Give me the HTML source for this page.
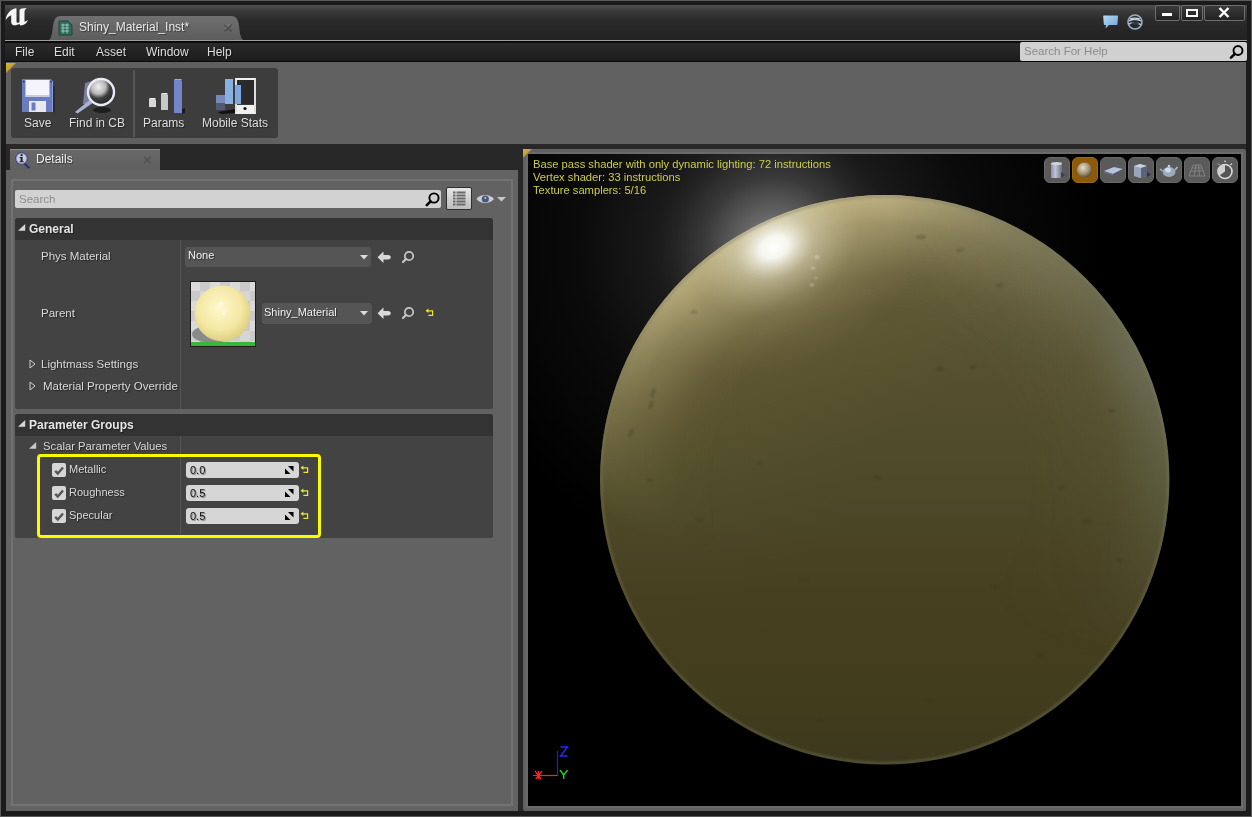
<!DOCTYPE html>
<html><head><meta charset="utf-8">
<style>
*{margin:0;padding:0;box-sizing:border-box}
html,body{width:1252px;height:817px;overflow:hidden;background:#1c1c1c}
body{position:relative;font-family:"Liberation Sans",sans-serif;color:#ddd;-webkit-font-smoothing:antialiased}
.a{position:absolute}
.t{position:absolute;white-space:nowrap;line-height:1;will-change:transform;text-shadow:1px 1px 1px rgba(0,0,0,0.45)}
/* frame */
#frame{left:0;top:0;width:1252px;height:817px;border:1px solid #5a5a5a;background:#1b1b1b}
#app{left:6px;top:62px;width:1240px;height:749px;background:#282828}
#title{left:5px;top:5px;width:1242px;height:35px;background:linear-gradient(#505050 0,#3a3a3a 6px,#2a2a2a 16px,#222 35px)}
#tab{left:45px;top:16px;width:202px;height:25px}
#menubar{left:5px;top:40px;width:1242px;height:22px;background:linear-gradient(#2c2c2c,#1c1c1c);border-top:1px solid #9a9a9a;box-shadow:inset 0 1px 0 #0a0a0a,inset 0 2px 0 #0a0a0a;border-bottom:1px solid #0a0a0a}
#toolarea{left:6px;top:62px;width:1240px;height:82px;background:#606060}
#toolbox{left:11px;top:68px;width:267px;height:70px;background:#3d3d3d;border-radius:3px}
#gap{left:6px;top:144px;width:1240px;height:5px;background:#282828}
#dtab{left:10px;top:149px;width:150px;height:21px;background:linear-gradient(#686868,#606060);border-top:1px solid #a08e3c}
#dpanel{left:6px;top:170px;width:512px;height:641px;background:#636363}
#dinner{left:11px;top:179px;width:502px;height:627px;background:#626262;border:2px solid #727272}
#vpanel{left:523px;top:149px;width:723px;height:662px;background:#616161;border-radius:2px}
#vinner{left:526px;top:152px;width:717px;height:656px;background:#6a6a6a}
#vp{left:528px;top:154px;width:713px;height:652px;background:#000;overflow:hidden}
</style></head><body>
<div id="frame" class="a"></div>
<div id="app" class="a"></div>
<div id="title" class="a"></div>
<div id="tab" class="a"><svg width="202" height="25"><defs><linearGradient id="tabg" x1="0" y1="0" x2="0" y2="1"><stop offset="0" stop-color="#707070"/><stop offset="1" stop-color="#5c5c5c"/></linearGradient></defs><path d="M0 25 C5 25 6.5 22 7.5 14 C8.5 4 10 0 16 0 L186 0 C192 0 193.5 4 194.5 14 C195.5 22 197 25 202 25 Z" fill="url(#tabg)"/></svg></div>
<div class="t" style="left:79px;top:21px;font-size:12px;color:#e8e8e8">Shiny_Material_Inst*</div>
<div class="t" style="left:224px;top:21px;font-size:12px;color:#8a8a8a">×</div>

<!-- UE logo -->
<svg class="a" style="left:0;top:0" width="32" height="32" viewBox="0 0 32 32">
<path d="M5.6 19.8 C6.6 13.5 10.5 9.6 15.3 8.2 L16.5 8.6 L16.5 21.2 C16.5 22.6 17.6 23 18.6 22.5 L19.5 22 L19.5 11 C19.5 9.6 20.4 8.8 21.8 8.6 L26.8 8 C25.4 9 24.5 10.2 24.5 12 L24.5 21.8 C25.8 21.4 27 20.8 28 20 C26.8 23.2 24 25.4 20.8 25.6 C19.8 25.2 19.4 24.6 19.5 23.8 C17.5 25 15.5 25.6 13.5 25.2 C12 24.8 11.2 23.6 11.2 22 L11.2 15.2 C9 16 7.2 17.6 6 19.5Z" fill="#f6f6f6"/>
</svg>
<!-- tab icon -->
<svg class="a" style="left:58px;top:20px" width="15" height="16" viewBox="0 0 15 16">
<path d="M1 1 L10 1 L14 5 L14 15 L1 15Z" fill="#2f6a5a" stroke="#1a3a30" stroke-width="0.8"/>
<path d="M3 5 h8 M3 8 h8 M3 11 h8 M5 3.5 v10 M9 3.5 v10" stroke="#9ad0c0" stroke-width="0.9"/>
</svg>
<svg class="a" style="left:224px;top:24px" width="8" height="8"><path d="M0.5 0.5 L7.5 7.5 M7.5 0.5 L0.5 7.5" stroke="#4a4a4a" stroke-width="1.1"/></svg>
<!-- chat & globe -->
<svg class="a" style="left:1102px;top:14px" width="17" height="16" viewBox="0 0 17 16">
<defs><linearGradient id="chat" x1="0" y1="0" x2="1" y2="1"><stop offset="0" stop-color="#b8dcf4"/><stop offset="1" stop-color="#6aa0d0"/></linearGradient></defs>
<path d="M2 1.5 L15 1.5 C15.6 1.5 16 2 16 2.6 L15.5 10 C15.5 10.6 15 11 14.4 11 L7 11 L3.5 14.5 L4 11 L2.8 11 C2.2 11 1.8 10.5 1.8 10 L1.2 2.6 C1.2 2 1.5 1.5 2 1.5Z" fill="url(#chat)"/>
</svg>
<svg class="a" style="left:1126px;top:13px" width="18" height="18" viewBox="0 0 18 18">
<circle cx="9" cy="9" r="7" fill="none" stroke="#9ab0c8" stroke-width="1.6"/>
<path d="M3 8 C6 6 11 6 15.5 8 M3 11 C7 9 11 9.5 15 11.5 M4 6 C8 4.5 11 5 14 6" stroke="#c8d8e8" stroke-width="1.3" fill="none"/>
<path d="M4 10 L10 8.5 L14 10 L9 12Z" fill="#2a3a50"/>
</svg>
<!-- window buttons -->
<div class="a" style="left:1155px;top:5px;width:25px;height:16px;border:1px solid #6e6e6e;border-radius:2px;background:linear-gradient(#3a3a3a,#222)"></div>
<div class="a" style="left:1181px;top:5px;width:22px;height:16px;border:1px solid #6e6e6e;border-radius:2px;background:linear-gradient(#3a3a3a,#222)"></div>
<div class="a" style="left:1204px;top:5px;width:41px;height:16px;border:1px solid #6e6e6e;border-radius:2px;background:linear-gradient(#3a3a3a,#222)"></div>
<div class="a" style="left:1162px;top:13px;width:10px;height:3px;background:#fff"></div>
<div class="a" style="left:1186px;top:9px;width:12px;height:8px;border:2px solid #fff"></div>
<svg class="a" style="left:1218px;top:7px" width="12" height="11"><path d="M1.5 1 L10.5 10 M10.5 1 L1.5 10" stroke="#fff" stroke-width="2.4"/></svg>
<div id="menubar" class="a"></div>
<div class="t" style="left:15px;top:46px;font-size:12px;color:#ddd">File</div>
<div class="t" style="left:54px;top:46px;font-size:12px;color:#ddd">Edit</div>
<div class="t" style="left:96px;top:46px;font-size:12px;color:#ddd">Asset</div>
<div class="t" style="left:146px;top:46px;font-size:12px;color:#ddd">Window</div>
<div class="t" style="left:207px;top:46px;font-size:12px;color:#ddd">Help</div>
<div class="a" style="left:1020px;top:42px;width:227px;height:19px;background:#d0d0d0;border-radius:2px"></div>
<div class="t" style="left:1024px;top:46px;font-size:11.5px;color:#8c8c8c;text-shadow:none">Search For Help</div>
<svg class="a" style="left:1227px;top:43px" width="18" height="18" viewBox="0 0 18 18"><circle cx="11" cy="7.5" r="4.5" fill="none" stroke="#000" stroke-width="1.9"/><path d="M7.8 10.8 L4 14.6" stroke="#000" stroke-width="2.6" stroke-linecap="round"/></svg>
<div id="toolarea" class="a"></div>
<div id="toolbox" class="a"></div>
<div class="a" style="left:133px;top:70px;width:2px;height:67px;background:#565656"></div>

<svg class="a" style="left:6px;top:63px" width="10" height="10"><path d="M0 0 L10 0 L0 10Z" fill="url(#ytri)"/></svg>
<!-- floppy -->
<svg class="a" style="left:20px;top:78px" width="36" height="36" viewBox="0 0 36 36">
<path d="M2 1.5 L31 1.5 L33 3.5 L33 34 L2 34Z" fill="#6a7cc0"/>
<path d="M2 1.5 L31 1.5 L33 3.5 L33 34 L32 34 L32 4 L30.5 2.5 L2 2.5Z" fill="#8a9ad8"/>
<rect x="5.5" y="2" width="24" height="17" fill="#f4f4fa"/>
<rect x="5.5" y="17" width="24" height="2" fill="#c8cce0"/>
<rect x="9" y="23" width="17" height="11" fill="#e8e8f0"/>
<rect x="11.5" y="24.5" width="4" height="8" fill="#6a7cc0"/>
<circle cx="3.8" cy="3.5" r="0.9" fill="#2a3060"/><circle cx="31" cy="3.5" r="0.9" fill="#2a3060"/>
<path d="M33 8 L35 9 L35 34 L33 34.5Z" fill="#222" opacity="0.6"/>
</svg>
<!-- magnifier -->
<svg class="a" style="left:70px;top:76px" width="48" height="42" viewBox="0 0 48 42">
<defs><radialGradient id="lens" cx="0.4" cy="0.3" r="0.8"><stop offset="0" stop-color="#f0f0f0"/><stop offset="0.35" stop-color="#b8b8b8"/><stop offset="0.55" stop-color="#404040"/><stop offset="1" stop-color="#1a1a1a"/></radialGradient></defs>
<path d="M15 7 L22 5 L22 28 L13 28Z" fill="#8890b0" opacity="0.8"/>
<ellipse cx="32" cy="34" rx="9" ry="3" fill="#111" opacity="0.7"/>
<path d="M5 36 L19 24.5 L22 27.5 L7.5 37.5Z" fill="#a8b0d8"/>
<circle cx="31" cy="16" r="13" fill="url(#lens)" stroke="#e8eaf8" stroke-width="2.4"/>
</svg>
<!-- params bars -->
<svg class="a" style="left:146px;top:77px" width="42" height="38" viewBox="0 0 42 38">
<path d="M3 22 L9 22 L10 23 L10 30 L3 30Z" fill="#d8d8d8"/><path d="M3 21 L9 21 L10 22 L4 22Z" fill="#f0f0f0"/>
<path d="M15 17 L21 17 L22 18 L22 33 L15 33Z" fill="#c8c8c8"/><path d="M15 16 L21 16 L22 17 L16 17Z" fill="#e8e8e8"/>
<path d="M28 3 L35 3 L36 4 L36 36 L28 36Z" fill="#7484c8"/><path d="M28 2 L35 2 L36 3 L29 3Z" fill="#98a8e0"/>
<path d="M36 32 L39 31 L39 36 L36 37Z" fill="#1a1a1a"/>
</svg>
<!-- mobile stats -->
<svg class="a" style="left:213px;top:77px" width="46" height="38" viewBox="0 0 46 38">
<rect x="3" y="18" width="9" height="15" fill="#7888b8"/><rect x="3" y="26" width="9" height="7" fill="#505a70"/>
<rect x="12" y="2" width="8" height="25" fill="#88b0e0"/>
<rect x="22" y="8" width="6" height="18" fill="#78a0d8"/>
<path d="M23 2 L42 2 L42 36 L23 36Z" fill="none" stroke="#f0f0f0" stroke-width="1.8"/>
<rect x="24" y="3" width="17" height="24" fill="#2a2a2a"/>
<rect x="22" y="8" width="6" height="19" fill="#80a8e0"/>
<rect x="24" y="28" width="17" height="7.5" fill="#f0f0f0"/>
<circle cx="32" cy="31.5" r="1.6" fill="#111"/>
<path d="M5 35 L22 32 L22 36 L8 37Z" fill="#111"/>
</svg>
<div class="t" style="left:24px;top:117px;font-size:12px;color:#ddd">Save</div>
<div class="t" style="left:69px;top:117px;font-size:12px;color:#ddd">Find in CB</div>
<div class="t" style="left:143px;top:117px;font-size:12px;color:#ddd">Params</div>
<div class="t" style="left:202px;top:117px;font-size:12px;color:#ddd">Mobile Stats</div>
<div id="gap" class="a"></div>
<div id="dtab" class="a"></div>
<div class="t" style="left:36px;top:153px;font-size:12px;color:#eee">Details</div>
<div id="dpanel" class="a"></div>
<div id="dinner" class="a"></div>

<!-- details content -->
<div class="a" style="left:15px;top:190px;width:426px;height:18px;background:#d2d2d2;border-radius:2px"></div>
<div class="t" style="left:19px;top:194px;font-size:11.5px;color:#8e8e8e;text-shadow:none">Search</div>
<div class="a" style="left:446px;top:187px;width:26px;height:23px;background:linear-gradient(#e6e6e6,#bdbdbd);border:1px solid #2e2e2e;border-radius:2px"></div>
<!-- General category -->
<div class="a" style="left:15px;top:218px;width:478px;height:191px;background:#434343;border-radius:3px 3px 2px 2px;overflow:hidden">
  <div class="a" style="left:0;top:0;width:478px;height:22px;background:#333"></div>
  <div class="a" style="left:165px;top:22px;width:1px;height:169px;background:#555"></div>
</div>
<div class="t" style="left:29px;top:223px;font-size:12px;font-weight:bold;color:#e6e6e6">General</div>
<div class="t" style="left:41px;top:251px;font-size:11.5px;color:#d8d8d8">Phys Material</div>
<div class="a" style="left:185px;top:247px;width:186px;height:20px;background:#555;border-radius:3px"></div>
<div class="t" style="left:188px;top:250px;font-size:11px;color:#f0f0f0">None</div>
<div class="t" style="left:41px;top:308px;font-size:11.5px;color:#d8d8d8">Parent</div>
<div class="a" style="left:262px;top:303px;width:110px;height:21px;background:#555;border-radius:3px"></div>
<div class="t" style="left:264px;top:307px;font-size:11px;color:#f0f0f0">Shiny_Material</div>
<div class="t" style="left:41px;top:359px;font-size:11.5px;color:#d8d8d8">Lightmass Settings</div>
<div class="t" style="left:43px;top:381px;font-size:11.5px;color:#d8d8d8">Material Property Override</div>
<!-- Parameter groups -->
<div class="a" style="left:15px;top:414px;width:478px;height:124px;background:#434343;border-radius:3px 3px 2px 2px;overflow:hidden">
  <div class="a" style="left:0;top:0;width:478px;height:22px;background:#333"></div>
  <div class="a" style="left:165px;top:22px;width:1px;height:102px;background:#555"></div>
</div>
<div class="t" style="left:29px;top:419px;font-size:12px;font-weight:bold;color:#e6e6e6">Parameter Groups</div>
<div class="t" style="left:43px;top:441px;font-size:11.25px;color:#d8d8d8">Scalar Parameter Values</div>
<div class="t" style="left:69px;top:464px;font-size:11px;color:#d8d8d8">Metallic</div>
<div class="t" style="left:69px;top:487px;font-size:11px;color:#d8d8d8">Roughness</div>
<div class="t" style="left:69px;top:510px;font-size:11px;color:#d8d8d8">Specular</div>
<div class="a" style="left:186px;top:462px;width:113px;height:16px;background:#d6d6d6;border-radius:3px"></div>
<div class="a" style="left:186px;top:485px;width:113px;height:16px;background:#d6d6d6;border-radius:3px"></div>
<div class="a" style="left:186px;top:508px;width:113px;height:16px;background:#d6d6d6;border-radius:3px"></div>
<div class="t" style="left:190px;top:465px;font-size:11px;color:#111">0.0</div>
<div class="t" style="left:190px;top:488px;font-size:11px;color:#111">0.5</div>
<div class="t" style="left:190px;top:511px;font-size:11px;color:#111">0.5</div>

<svg class="a" style="left:13px;top:151px" width="20" height="18" viewBox="0 0 20 18">
<path d="M12 12 L17 16.5 L15.5 17.5 L10.5 13Z" fill="#1e2a6a"/>
<circle cx="8.5" cy="7.5" r="6" fill="#8a94c0" stroke="#3a4a8a" stroke-width="1"/>
<circle cx="8.5" cy="7.5" r="4.8" fill="#c8cce0"/>
<rect x="7.6" y="6" width="2" height="5" fill="#222"/><rect x="6.6" y="10.2" width="4" height="1" fill="#222"/><rect x="6.6" y="6" width="2" height="1" fill="#222"/>
<circle cx="8.6" cy="4.2" r="1.1" fill="#222"/>
</svg>
<svg class="a" style="left:143px;top:156px" width="9" height="8"><path d="M1 0.5 L8 7.5 M8 0.5 L1 7.5" stroke="#505050" stroke-width="1.1"/></svg>
<!-- search magnifier -->
<svg class="a" style="left:423px;top:190px" width="18" height="18" viewBox="0 0 18 18">
<circle cx="11" cy="8" r="4.6" fill="none" stroke="#000" stroke-width="1.9"/>
<path d="M7.6 11.4 L3.8 15.2" stroke="#000" stroke-width="2.6" stroke-linecap="round"/>
</svg>
<!-- list button icon -->
<svg class="a" style="left:446px;top:187px" width="26" height="23" viewBox="0 0 26 23">
<g fill="#6a6a6a"><rect x="7" y="4.5" width="2.5" height="2"/><rect x="10.5" y="4.5" width="9" height="2"/>
<rect x="7" y="7.5" width="2.5" height="2"/><rect x="10.5" y="7.5" width="9" height="2"/>
<rect x="7" y="10.5" width="2.5" height="2"/><rect x="10.5" y="10.5" width="9" height="2"/>
<rect x="7" y="13.5" width="2.5" height="2"/><rect x="10.5" y="13.5" width="9" height="2"/>
<rect x="7" y="16.5" width="2.5" height="2"/><rect x="10.5" y="16.5" width="9" height="2"/></g>
</svg>
<!-- eye -->
<svg class="a" style="left:475px;top:192px" width="34" height="14" viewBox="0 0 34 14">
<path d="M1.5 7 C5 1.5 15 1.5 19 7 C15 12.5 5 12.5 1.5 7Z" fill="#c8ccd8"/>
<circle cx="10.3" cy="7" r="3.6" fill="#4a5878"/><circle cx="10.3" cy="6" r="1" fill="#c0c8d8"/>
<path d="M22 5 L31 5 L26.5 9.5Z" fill="#c8c8c8"/>
</svg>
<!-- General triangle -->
<svg class="a" style="left:15px;top:222px" width="12" height="11"><path d="M10.2 2 L10.2 8.8 L3 8.8Z" fill="#d8d8d8"/></svg>
<svg class="a" style="left:15px;top:418px" width="12" height="11"><path d="M10.2 2 L10.2 8.8 L3 8.8Z" fill="#d8d8d8"/></svg>
<svg class="a" style="left:28px;top:440px" width="12" height="11"><path d="M8.2 2 L8.2 8.8 L1 8.8Z" fill="#c8c8c8"/></svg>
<!-- outline triangles -->
<svg class="a" style="left:29px;top:359px" width="8" height="10"><path d="M1 1 L6 5 L1 9Z" fill="none" stroke="#d0d0d0" stroke-width="1"/></svg>
<svg class="a" style="left:29px;top:381px" width="8" height="10"><path d="M1 1 L6 5 L1 9Z" fill="none" stroke="#d0d0d0" stroke-width="1"/></svg>
<!-- combo arrows + icons row1 -->
<svg class="a" style="left:358px;top:253px" width="12" height="8"><path d="M2 2 L10 2 L6 6.5Z" fill="#dcdcdc"/></svg>
<svg class="a" style="left:358px;top:309px" width="12" height="8"><path d="M2 2 L10 2 L6 6.5Z" fill="#dcdcdc"/></svg>
<svg class="a" style="left:376px;top:250px" width="16" height="15" viewBox="0 0 16 15"><path d="M1.5 7.2 L7.5 1.5 L7.5 5 L12 5 C14 5 14.8 6 14.8 7.2 C14.8 8.4 14 9.4 12 9.4 L7.5 9.4 L7.5 13 Z" fill="#d8d8d8"/></svg>
<svg class="a" style="left:376px;top:306px" width="16" height="15" viewBox="0 0 16 15"><path d="M1.5 7.2 L7.5 1.5 L7.5 5 L12 5 C14 5 14.8 6 14.8 7.2 C14.8 8.4 14 9.4 12 9.4 L7.5 9.4 L7.5 13 Z" fill="#d8d8d8"/></svg>
<svg class="a" style="left:400px;top:249px" width="16" height="16" viewBox="0 0 16 16"><circle cx="9" cy="7" r="4.2" fill="none" stroke="#c8c8c8" stroke-width="1.7"/><path d="M6 10 L3 13" stroke="#c8c8c8" stroke-width="2.2" stroke-linecap="round"/></svg>
<svg class="a" style="left:400px;top:305px" width="16" height="16" viewBox="0 0 16 16"><circle cx="9" cy="7" r="4.2" fill="none" stroke="#c8c8c8" stroke-width="1.7"/><path d="M6 10 L3 13" stroke="#c8c8c8" stroke-width="2.2" stroke-linecap="round"/></svg>
<svg class="a" style="left:425px;top:308px" width="10" height="9" viewBox="0 0 10 9"><path d="M3 2.8 L7.6 2.8 L7.6 7.3 L3.4 7.3" fill="none" stroke="#e8e830" stroke-width="1.2"/><path d="M0.6 2.8 L3.4 0.6 L3.4 5Z" fill="#e8e830"/></svg>
<svg class="a" style="left:300px;top:465px" width="10" height="9" viewBox="0 0 10 9"><path d="M3 2.8 L7.6 2.8 L7.6 7.3 L3.4 7.3" fill="none" stroke="#e8e830" stroke-width="1.2"/><path d="M0.6 2.8 L3.4 0.6 L3.4 5Z" fill="#e8e830"/></svg>
<svg class="a" style="left:284px;top:465px" width="11" height="10"><path d="M4 1 L9.5 1 L9.5 6.5Z M1 3.5 L1 9 L6.5 9Z" fill="#000"/></svg>
<svg class="a" style="left:52px;top:463px" width="15" height="15" viewBox="0 0 15 15"><rect x="0" y="0" width="14" height="14" rx="2" fill="#d6d6d6"/><path d="M3.2 7.8 L5.8 10.5 L11 4.5" fill="none" stroke="#555" stroke-width="2.4"/></svg>
<svg class="a" style="left:300px;top:488px" width="10" height="9" viewBox="0 0 10 9"><path d="M3 2.8 L7.6 2.8 L7.6 7.3 L3.4 7.3" fill="none" stroke="#e8e830" stroke-width="1.2"/><path d="M0.6 2.8 L3.4 0.6 L3.4 5Z" fill="#e8e830"/></svg>
<svg class="a" style="left:284px;top:488px" width="11" height="10"><path d="M4 1 L9.5 1 L9.5 6.5Z M1 3.5 L1 9 L6.5 9Z" fill="#000"/></svg>
<svg class="a" style="left:52px;top:486px" width="15" height="15" viewBox="0 0 15 15"><rect x="0" y="0" width="14" height="14" rx="2" fill="#d6d6d6"/><path d="M3.2 7.8 L5.8 10.5 L11 4.5" fill="none" stroke="#555" stroke-width="2.4"/></svg>
<svg class="a" style="left:300px;top:511px" width="10" height="9" viewBox="0 0 10 9"><path d="M3 2.8 L7.6 2.8 L7.6 7.3 L3.4 7.3" fill="none" stroke="#e8e830" stroke-width="1.2"/><path d="M0.6 2.8 L3.4 0.6 L3.4 5Z" fill="#e8e830"/></svg>
<svg class="a" style="left:284px;top:511px" width="11" height="10"><path d="M4 1 L9.5 1 L9.5 6.5Z M1 3.5 L1 9 L6.5 9Z" fill="#000"/></svg>
<svg class="a" style="left:52px;top:509px" width="15" height="15" viewBox="0 0 15 15"><rect x="0" y="0" width="14" height="14" rx="2" fill="#d6d6d6"/><path d="M3.2 7.8 L5.8 10.5 L11 4.5" fill="none" stroke="#555" stroke-width="2.4"/></svg>
<svg class="a" style="left:190px;top:281px" width="66" height="66" viewBox="0 0 66 66">
<defs>
<pattern id="chk" width="20" height="20" patternUnits="userSpaceOnUse"><rect width="20" height="20" fill="#cacaca"/><rect width="10" height="10" fill="#dadada"/><rect x="10" y="10" width="10" height="10" fill="#d6d6d6"/></pattern>
<radialGradient id="ys" cx="0.45" cy="0.4" r="0.65"><stop offset="0" stop-color="#fff8cc"/><stop offset="0.6" stop-color="#f4e8a4"/><stop offset="1" stop-color="#d8c878"/></radialGradient>
</defs>
<rect x="0" y="0" width="66" height="66" fill="#1c1c1c"/>
<rect x="1" y="1" width="64" height="64" fill="url(#chk)"/>
<ellipse cx="22" cy="53" rx="20" ry="9" fill="#8a8a8a"/>
<circle cx="32.5" cy="32.5" r="28" fill="url(#ys)"/>
<circle cx="31" cy="23" r="2.5" fill="#fffbe8" opacity="0.5"/>
<circle cx="34" cy="32" r="2.2" fill="#fffbe8" opacity="0.5"/>
<rect x="1" y="61" width="64" height="4" fill="#3cb43c"/>
</svg>
<div class="a" style="left:37px;top:454px;width:284px;height:84px;border:3px solid #fafa00;border-radius:4px"></div>
<div id="vpanel" class="a"></div>
<div id="vinner" class="a"></div>
<svg class="a" style="left:523px;top:149px" width="9" height="9"><defs><linearGradient id="ytri" x1="0" y1="0" x2="1" y2="1"><stop offset="0" stop-color="#d8b838"/><stop offset="0.6" stop-color="#b89830"/><stop offset="1" stop-color="#777" stop-opacity="0"/></linearGradient></defs><path d="M0 0 L9 0 L0 9Z" fill="url(#ytri)"/></svg>
<div id="vp" class="a">
<svg width="713" height="652" style="position:absolute;left:0;top:0">
<defs>
<radialGradient id="bloom" cx="246" cy="93" r="330" gradientUnits="userSpaceOnUse">
<stop offset="0" stop-color="#9a9a9a"/>
<stop offset="0.1" stop-color="#646464"/>
<stop offset="0.17" stop-color="#4a4a4a"/>
<stop offset="0.21" stop-color="#3a3a3a"/>
<stop offset="0.3" stop-color="#242424"/>
<stop offset="0.36" stop-color="#1a1a1a"/>
<stop offset="0.6" stop-color="#0a0a0a"/>
<stop offset="1" stop-color="#000"/>
</radialGradient>
<linearGradient id="base" x1="0" y1="41" x2="0" y2="611" gradientUnits="userSpaceOnUse">
<stop offset="0" stop-color="#625c3c"/>
<stop offset="0.15" stop-color="#5e5836"/>
<stop offset="0.35" stop-color="#544e2c"/>
<stop offset="0.5" stop-color="#4e4a28"/>
<stop offset="0.7" stop-color="#463f20"/>
<stop offset="0.88" stop-color="#423d1c"/>
<stop offset="1" stop-color="#3c381e"/>
</linearGradient>
<radialGradient id="gloss" cx="246" cy="93" r="220" gradientUnits="userSpaceOnUse" gradientTransform="translate(246 93) rotate(-25) scale(1.35 1) translate(-246 -93)">
<stop offset="0" stop-color="#fff" stop-opacity="1"/>
<stop offset="0.05" stop-color="#fafaf4" stop-opacity="0.95"/>
<stop offset="0.14" stop-color="#d8d0b0" stop-opacity="0.6"/>
<stop offset="0.3" stop-color="#b0a070" stop-opacity="0.3"/>
<stop offset="0.55" stop-color="#908050" stop-opacity="0.08"/>
<stop offset="1" stop-color="#807040" stop-opacity="0"/>
</radialGradient>
<radialGradient id="rimTop" cx="357" cy="326" r="285" gradientUnits="userSpaceOnUse">
<stop offset="0.6" stop-color="#c4b888" stop-opacity="0"/>
<stop offset="0.72" stop-color="#c4b888" stop-opacity="0.1"/>
<stop offset="0.78" stop-color="#c4b888" stop-opacity="0.25"/>
<stop offset="0.9" stop-color="#c4b888" stop-opacity="0.62"/>
<stop offset="0.93" stop-color="#c6ba8a" stop-opacity="0.76"/>
<stop offset="0.97" stop-color="#c8bc8c" stop-opacity="0.9"/>
<stop offset="1" stop-color="#ccc094" stop-opacity="0.95"/>
</radialGradient>
<radialGradient id="topMask" cx="250" cy="80" r="330" gradientUnits="userSpaceOnUse">
<stop offset="0" stop-color="#fff"/>
<stop offset="0.35" stop-color="#fff" stop-opacity="0.95"/>
<stop offset="0.7" stop-color="#fff" stop-opacity="0.35"/>
<stop offset="1" stop-color="#fff" stop-opacity="0"/>
</radialGradient>
<mask id="mTop"><rect width="713" height="652" fill="url(#topMask)"/></mask>
<radialGradient id="rimR" cx="357" cy="326" r="285" gradientUnits="userSpaceOnUse">
<stop offset="0.5" stop-color="#8e988c" stop-opacity="0"/>
<stop offset="0.8" stop-color="#8e988c" stop-opacity="0.1"/>
<stop offset="0.95" stop-color="#96a098" stop-opacity="0.3"/>
<stop offset="1" stop-color="#96a098" stop-opacity="0.35"/>
</radialGradient>
<radialGradient id="leftL" cx="130" cy="230" r="230" gradientUnits="userSpaceOnUse">
<stop offset="0" stop-color="#807648" stop-opacity="0.15"/>
<stop offset="1" stop-color="#6a6238" stop-opacity="0"/>
</radialGradient>
<radialGradient id="rMaskG" cx="600" cy="220" r="280" gradientUnits="userSpaceOnUse">
<stop offset="0" stop-color="#fff"/>
<stop offset="1" stop-color="#fff" stop-opacity="0"/>
</radialGradient>
<mask id="mR"><rect width="713" height="652" fill="url(#rMaskG)"/></mask>
<filter id="blur1" x="-50%" y="-50%" width="200%" height="200%"><feGaussianBlur stdDeviation="0.9"/></filter>
<clipPath id="sph"><circle cx="356.7" cy="325.8" r="284.7"/></clipPath>
</defs>
<rect width="713" height="652" fill="url(#bloom)"/>
<g clip-path="url(#sph)">
<rect width="713" height="652" fill="url(#base)"/>
<rect width="713" height="652" fill="url(#rimTop)" mask="url(#mTop)"/>
<rect width="713" height="652" fill="url(#leftL)"/>
<rect width="713" height="652" fill="url(#rimR)" mask="url(#mR)"/>
<rect width="713" height="652" fill="url(#gloss)"/>
<circle cx="356.7" cy="325.8" r="283.4" fill="none" stroke="#7a7a60" stroke-opacity="0.4" stroke-width="2.6" filter="url(#blur1)"/>
<g fill="#2e2a14" opacity="0.25" filter="url(#blur1)"><ellipse cx="393" cy="83" rx="5" ry="2" transform="rotate(0 393 83)"/><ellipse cx="125" cy="239" rx="2" ry="5" transform="rotate(20 125 239)"/><ellipse cx="123" cy="251" rx="2" ry="4" transform="rotate(20 123 251)"/><ellipse cx="166" cy="158" rx="3" ry="1.5" transform="rotate(-10 166 158)"/><ellipse cx="103" cy="279" rx="2" ry="4" transform="rotate(20 103 279)"/><ellipse cx="349" cy="323" rx="4" ry="1.5" transform="rotate(0 349 323)"/><ellipse cx="559" cy="367" rx="5" ry="1.5" transform="rotate(0 559 367)"/><ellipse cx="533" cy="334" rx="3" ry="1.5" transform="rotate(0 533 334)"/><ellipse cx="467" cy="433" rx="4" ry="1.3" transform="rotate(0 467 433)"/><ellipse cx="584" cy="257" rx="3" ry="1.5" transform="rotate(0 584 257)"/><ellipse cx="412" cy="215" rx="4" ry="2" transform="rotate(0 412 215)"/><ellipse cx="445" cy="213" rx="3" ry="2" transform="rotate(0 445 213)"/><ellipse cx="276" cy="426" rx="4" ry="1.2" transform="rotate(0 276 426)"/><ellipse cx="232" cy="309" rx="3" ry="1.3" transform="rotate(0 232 309)"/><ellipse cx="172" cy="366" rx="3" ry="1.3" transform="rotate(0 172 366)"/><ellipse cx="512" cy="501" rx="4" ry="1.3" transform="rotate(0 512 501)"/><ellipse cx="402" cy="546" rx="4" ry="1.2" transform="rotate(0 402 546)"/><ellipse cx="292" cy="566" rx="3" ry="1.2" transform="rotate(0 292 566)"/><ellipse cx="592" cy="406" rx="3" ry="1.5" transform="rotate(0 592 406)"/><ellipse cx="122" cy="326" rx="3" ry="1.5" transform="rotate(0 122 326)"/><ellipse cx="432" cy="96" rx="4" ry="1.5" transform="rotate(-10 432 96)"/><ellipse cx="472" cy="131" rx="4" ry="1.5" transform="rotate(-10 472 131)"/></g>
<g fill="#fff" opacity="0.4" filter="url(#blur1)"><ellipse cx="289" cy="103" rx="2.5" ry="1.5"/><ellipse cx="285" cy="114" rx="2" ry="1.2"/><ellipse cx="284" cy="131" rx="2" ry="1.2"/><ellipse cx="288" cy="124" rx="1.5" ry="1"/></g>
</g>
</svg>
<div class="a" style="left:516px;top:3px;width:26px;height:26px;background:#5a5a5a;border:1px solid #686868;border-radius:6px;overflow:hidden"><div class="a" style="left:-1px;top:-1px"><svg width="26" height="26"><defs><linearGradient id="cyl" x1="0" x2="1"><stop offset="0" stop-color="#8890a8"/><stop offset="0.4" stop-color="#c0c4d4"/><stop offset="1" stop-color="#6a7080"/></linearGradient></defs><rect x="7" y="6" width="11" height="15" fill="url(#cyl)"/><ellipse cx="12.5" cy="6.5" rx="5.5" ry="1.5" fill="#d0d4e0"/><path d="M17 15 L21 18 L17 21Z" fill="#3a4048"/></svg></div></div>
<div class="a" style="left:544px;top:3px;width:26px;height:26px;background:#8c5a0a;border:1px solid #9a6a14;border-radius:6px;overflow:hidden"><div class="a" style="left:-1px;top:-1px"><svg width="26" height="26"><defs><radialGradient id="bs" cx="0.4" cy="0.35" r="0.7"><stop offset="0" stop-color="#e8dccc"/><stop offset="0.6" stop-color="#a09070"/><stop offset="1" stop-color="#504430"/></radialGradient></defs><circle cx="12.5" cy="13" r="7.5" fill="url(#bs)"/></svg></div></div>
<div class="a" style="left:572px;top:3px;width:26px;height:26px;background:#5a5a5a;border:1px solid #686868;border-radius:6px;overflow:hidden"><div class="a" style="left:-1px;top:-1px"><svg width="26" height="26"><path d="M4 14 L14 10 L23 12 L13 17 Z" fill="#b8c4dc"/><path d="M4 14 L13 17 L13 18.5 L4 15.5Z" fill="#6a7488"/><path d="M13 17 L23 12 L23 13.5 L13 18.5Z" fill="#505a6a"/></svg></div></div>
<div class="a" style="left:600px;top:3px;width:26px;height:26px;background:#5a5a5a;border:1px solid #686868;border-radius:6px;overflow:hidden"><div class="a" style="left:-1px;top:-1px"><svg width="26" height="26"><path d="M6 9 L12 7 L19 9 L19 19 L12 21 L6 19Z" fill="#9aa4bc"/><path d="M6 9 L12 7 L19 9 L13 11Z" fill="#c8d0e0"/><path d="M13 11 L19 9 L19 19 L13 21Z" fill="#5a6478"/><path d="M19 15 L23 17.5 L19 20Z" fill="#2e3440"/></svg></div></div>
<div class="a" style="left:628px;top:3px;width:26px;height:26px;background:#5a5a5a;border:1px solid #686868;border-radius:6px;overflow:hidden"><div class="a" style="left:-1px;top:-1px"><svg width="26" height="26"><ellipse cx="13" cy="15" rx="6.5" ry="5" fill="#9aaabd"/><ellipse cx="12" cy="13" rx="3" ry="2.5" fill="#d0dae8"/><path d="M6.5 14 L4 12" stroke="#b0bccc" stroke-width="1.5"/><path d="M19 13 L21.5 10" stroke="#b0bccc" stroke-width="1.5"/><circle cx="13" cy="9" r="1.3" fill="#c8d0dc"/></svg></div></div>
<div class="a" style="left:656px;top:3px;width:26px;height:26px;background:#5a5a5a;border:1px solid #686868;border-radius:6px;overflow:hidden"><div class="a" style="left:-1px;top:-1px"><svg width="26" height="26" stroke="#8a8a8a" stroke-width="0.8" fill="none"><path d="M9 8 L17 8 L21 19 L5 19Z"/><path d="M12 8 L10 19 M14.5 8 L15.5 19 M7 14 L19 14 M8 11 L18 11"/></svg></div></div>
<div class="a" style="left:684px;top:3px;width:26px;height:26px;background:#5a5a5a;border:1px solid #686868;border-radius:6px;overflow:hidden"><div class="a" style="left:-1px;top:-1px"><svg width="26" height="26"><circle cx="13" cy="14.5" r="7" fill="#555" stroke="#d8d8d8" stroke-width="1.6"/><path d="M13 14.5 L13 7.5 A7 7 0 0 0 7.5 18.5Z" fill="#cfcfcf"/><path d="M12 5 L14 5 L13 3Z" fill="#ddd"/><path d="M18.5 8 L20 6.5" stroke="#ccc" stroke-width="1.2"/><path d="M7.5 8 L6 6.5" stroke="#ccc" stroke-width="1"/></svg></div></div>
<svg class="a" style="left:0;top:585px" width="50" height="40">
<path d="M29.5 12 L29.5 36.5" stroke="#1a1aff" stroke-width="1.2"/>
<path d="M5 36.5 L29.5 36.5" stroke="#ff2020" stroke-width="1.2"/>
<path d="M7 32 L14 41 M14 32 L7 41 M10.5 32 L10.5 41" stroke="#ff2020" stroke-width="1.3"/>
<path d="M32.5 8 L39.5 8 L32.5 17 L39.5 17" stroke="#2a2aff" stroke-width="1.4" fill="none"/>
<path d="M32 31 L35.7 36 L39.5 31 M35.7 36 L35.7 41" stroke="#20d020" stroke-width="1.4" fill="none"/>
</svg><div class="t" style="left:5px;top:4px;font-size:11.2px;color:#cccc50;line-height:13px;text-shadow:none">Base pass shader with only dynamic lighting: 72 instructions<br>Vertex shader: 33 instructions<br>Texture samplers: 5/16</div>
</div>
</body></html>
